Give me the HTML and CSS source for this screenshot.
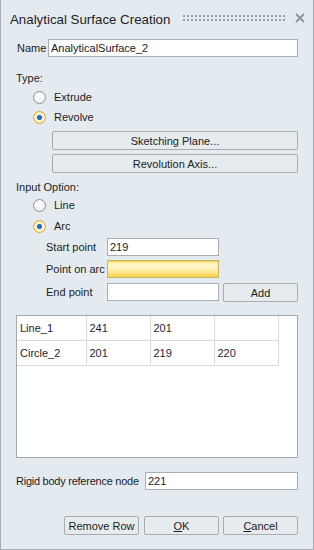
FILE: index.html
```html
<!DOCTYPE html>
<html>
<head>
<meta charset="utf-8">
<link rel="stylesheet" href="styles.css">
</head>
<body>
<div class="win">
  <div class="titlebar">
    <span class="title">Analytical Surface Creation</span>
    <svg class="grip" width="104" height="6" viewBox="0 0 104 6">
      <defs>
        <pattern id="dots" width="4" height="4" patternUnits="userSpaceOnUse">
          <rect x="0" y="0" width="2" height="2" fill="#999da1"/>
        </pattern>
      </defs>
      <rect x="0" y="0" width="104" height="6" fill="url(#dots)"/>
    </svg>
    <svg class="close" width="10" height="10" viewBox="0 0 10 10">
      <path d="M1 1 L9 9 M9 1 L1 9" stroke="#8e9296" stroke-width="1.8" fill="none"/>
    </svg>
  </div>
  <div class="content">
    <div class="name-row">
      <span class="name-label">Name</span>
      <div class="field grow">AnalyticalSurface_2</div>
    </div>

    <div class="section-label type-label">Type:</div>
    <div class="radio-row first"><span class="radio"></span><span>Extrude</span></div>
    <div class="radio-row"><span class="radio checked"></span><span>Revolve</span></div>
    <div class="btn wide first-btn">Sketching Plane...</div>
    <div class="btn wide second-btn">Revolution Axis...</div>

    <div class="section-label input-label">Input Option:</div>
    <div class="radio-row tight"><span class="radio"></span><span>Line</span></div>
    <div class="radio-row tight"><span class="radio checked"></span><span>Arc</span></div>

    <div class="point-row start-row">
      <span class="point-label">Start point</span>
      <div class="field point-field">219</div>
    </div>
    <div class="point-row arc-row">
      <span class="point-label">Point on arc</span>
      <div class="field point-field active"></div>
    </div>
    <div class="point-row end-row">
      <span class="point-label">End point</span>
      <div class="field point-field"></div>
      <div class="btn add-btn">Add</div>
    </div>

    <div class="table-box">
      <table class="grid">
        <tr><td class="c1">Line_1</td><td class="c2">241</td><td class="c3">201</td><td class="c4"></td></tr>
        <tr class="r2"><td class="c1">Circle_2</td><td class="c2">201</td><td class="c3">219</td><td class="c4">220</td></tr>
      </table>
    </div>

    <div class="rigid-row">
      <span class="rigid-label">Rigid body reference node</span>
      <div class="field grow">221</div>
    </div>

    <div class="footer">
      <div class="btn foot-btn">Remove Row</div>
      <div class="btn foot-btn ok"><u>O</u>K</div>
      <div class="btn foot-btn"><u>C</u>ancel</div>
    </div>
  </div>
</div>
</body>
</html>
```

FILE: styles.css
```css
* { box-sizing: border-box; }
html, body { margin: 0; padding: 0; background: #e4ebf0; }
body {
  font-family: "Liberation Sans", Arial, sans-serif;
  font-size: 11px;
  color: #1c1c1c;
}
.win {
  width: 314px;
  height: 550px;
  background: #e4ebf0;
  border: 1px solid #a7adb2;
  border-top: none;
  overflow: hidden;
}
.titlebar {
  height: 34px;
  padding-top: 2px;
  display: flex;
  align-items: center;
  padding-left: 9px;
}
.title {
  flex: 1;
  font-size: 13.3px;
  color: #222;
  position: relative;
  top: 1px;
}
.grip { display: block; margin-right: 8px; }
.close { display: block; margin-right: 8px; }

.content { padding: 0 15px; }

.field {
  height: 18px;
  background: #fff;
  border: 1px solid #abadb3;
  line-height: 16px;
  padding-left: 2px;
  white-space: nowrap;
  overflow: hidden;
}
.grow { flex: 1; }

.name-row {
  margin-top: 5px;
  display: flex;
  align-items: center;
}
.name-label { width: 32px; padding-left: 1px; }

.section-label { line-height: 14px; height: 14px; }
.type-label { margin-top: 14px; }
.input-label { margin-top: 7px; }

.radio-row {
  height: 20px;
  display: flex;
  align-items: center;
  padding-left: 17px;
}
.radio-row.first { margin-top: 2px; }
.radio-row.tight { margin-top: 1px; }
.radio {
  width: 13px;
  height: 13px;
  border-radius: 50%;
  border: 1px solid #8f9397;
  background: radial-gradient(circle at 50% 40%, #ffffff 0, #f3f3f3 60%, #e2e2e2 100%);
  margin-right: 8px;
  position: relative;
}
.radio.checked {
  border-color: #dca632;
  background: radial-gradient(circle, #2c6bd1 0, #2c6bd1 2.4px, #fdf3cf 2.8px, #fbe9a8 100%);
}

.btn {
  height: 19px;
  background: #e6ebef;
  border: 1px solid #a9abad;
  border-radius: 2px;
  display: flex;
  align-items: center;
  justify-content: center;
}
.wide { margin-left: 36px; }
.first-btn { margin-top: 4px; }
.second-btn { margin-top: 4px; }

.point-row {
  display: flex;
  align-items: center;
  padding-left: 30px;
}
.start-row { margin-top: 2px; }
.arc-row { margin-top: 4px; }
.end-row { margin-top: 5px; align-items: flex-start; }
.point-label { width: 61px; }
.end-row .point-label { line-height: 18px; }
.point-field { width: 112px; }
.point-field.active {
  border-color: #c9b36a;
  background: linear-gradient(#f3cf3c 0, #fff1ad 12%, #fff7cf 35%, #fde78d 70%, #f7d24a 100%);
}
.add-btn { width: 75px; margin-left: 4px; }

.table-box {
  margin-top: 13px;
  height: 143px;
  background: #fff;
  border: 1px solid #a5a9ad;
}
.grid {
  border-collapse: collapse;
  table-layout: fixed;
}
.grid td {
  border: 1px solid #dadada;
  height: 25px;
  padding: 0 0 0 3px;
  vertical-align: middle;
  color: #1d1d33;
}
.grid tr:first-child td { border-top: none; height: 24px; }
.grid td.c1 { border-left: none; width: 69px; }
.grid td.c2 { width: 64px; }
.grid td.c3 { width: 64px; }
.grid td.c4 { width: 64px; }

.rigid-row {
  margin-top: 14px;
  display: flex;
  align-items: center;
}
.rigid-label { width: 129px; white-space: nowrap; letter-spacing: -0.25px; }

.footer {
  margin-top: 26px;
  display: flex;
  justify-content: flex-end;
  gap: 4px;
}
.foot-btn { width: 75px; }
.ok { margin-left: 1px; }
u { text-decoration: underline; text-underline-offset: 1px; }
```
